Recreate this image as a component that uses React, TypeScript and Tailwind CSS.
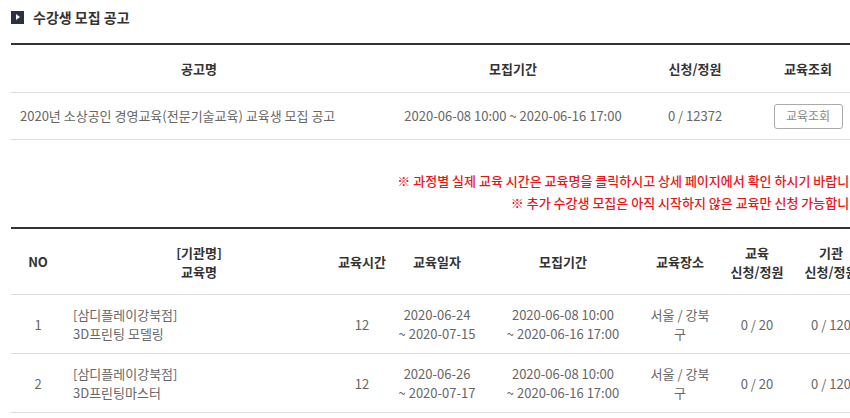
import React from "react";

const font = { fontFamily: '"Noto Sans CJK KR", "Noto Sans", sans-serif' };

const courses = [
  { no: 1, org: "[삼디플레이강북점]", name: "3D프린팅 모델링", hours: 12, start: "2020-06-24", end: "2020-07-15" },
  { no: 2, org: "[삼디플레이강북점]", name: "3D프린팅마스터", hours: 12, start: "2020-06-26", end: "2020-07-17" },
];

export default function App() {
  return (
    <div className="w-[850px] h-[418px] overflow-hidden bg-white" style={font}>
      <div className="w-[854px] ml-[11px]">
        {/* title */}
        <div className="h-[34px] mb-[9px] flex items-center gap-[9px]">
          <span className="w-[13px] h-[13px] bg-[#2b3045] flex items-center justify-center">
            <span className="w-0 h-0 border-y-[3px] border-y-transparent border-l-[4px] border-l-white ml-[1px]" />
          </span>
          <h2 className="text-[14px] font-bold text-[#333]">수강생 모집 공고</h2>
        </div>

        {/* notice table */}
        <div className="border-t-2 border-[#333] text-[13px]">
          <div className="grid grid-cols-[376px_252px_112px_114px] h-[48px] border-b border-[#ddd] items-center text-center font-bold text-[#333]">
            <div>공고명</div>
            <div>모집기간</div>
            <div>신청/정원</div>
            <div>교육조회</div>
          </div>
          <div className="grid grid-cols-[376px_252px_112px_114px] h-[47px] border-b border-[#ddd] items-center text-[#666]">
            <div className="pl-[9px]">2020년 소상공인 경영교육(전문기술교육) 교육생 모집 공고</div>
            <div className="text-center">2020-06-08 10:00 ~ 2020-06-16 17:00</div>
            <div className="text-center">0 / 12372</div>
            <div className="flex justify-center">
              <button className="w-[69px] h-[25px] border border-[#aaa] rounded-[3px] text-[12px] text-[#888] bg-white">
                교육조회
              </button>
            </div>
          </div>
        </div>

        {/* notes */}
        <div className="mt-[30px] text-right text-[13px] leading-[22px] font-medium text-[#e8161b]">
          <p>※ 과정별 실제 교육 시간은 교육명을 클릭하시고 상세 페이지에서 확인 하시기 바랍니다.</p>
          <p>※ 추가 수강생 모집은 아직 시작하지 않은 교육만 신청 가능합니다.</p>
        </div>

        {/* course table */}
        <div className="mt-[13px] border-t-2 border-[#333] text-[13px] leading-[19px]">
          <div className="grid grid-cols-[54px_268px_58px_92px_160px_74px_80px_68px] h-[66px] border-b border-[#ddd] items-center text-center font-bold text-[#333]">
            <div>NO</div>
            <div>[기관명]<br />교육명</div>
            <div>교육시간</div>
            <div>교육일자</div>
            <div>모집기간</div>
            <div>교육장소</div>
            <div>교육<br />신청/정원</div>
            <div>기관<br />신청/정원</div>
          </div>
          {courses.map((c) => (
            <div
              key={c.no}
              className="grid grid-cols-[54px_268px_58px_92px_160px_74px_80px_68px] h-[59px] border-b border-[#ddd] items-center text-center text-[#666]"
            >
              <div>{c.no}</div>
              <div className="text-left pl-[8px]">
                {c.org}
                <br />
                {c.name}
              </div>
              <div>{c.hours}</div>
              <div>
                {c.start}
                <br />~ {c.end}
              </div>
              <div>
                2020-06-08 10:00
                <br />~ 2020-06-16 17:00
              </div>
              <div className="px-[5px] break-all">서울 / 강북구</div>
              <div>0 / 20</div>
              <div>0 / 120</div>
            </div>
          ))}
        </div>
      </div>
    </div>
  );
}
